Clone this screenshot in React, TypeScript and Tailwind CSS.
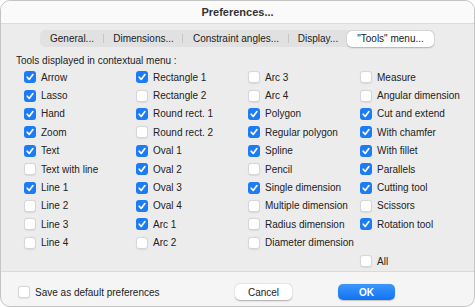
import React from 'react';

type Tool = { label: string; on: boolean } | null;

const columns: Tool[][] = [
  [
    { label: 'Arrow', on: true },
    { label: 'Lasso', on: true },
    { label: 'Hand', on: true },
    { label: 'Zoom', on: true },
    { label: 'Text', on: true },
    { label: 'Text with line', on: false },
    { label: 'Line 1', on: true },
    { label: 'Line 2', on: false },
    { label: 'Line 3', on: false },
    { label: 'Line 4', on: false },
    null,
  ],
  [
    { label: 'Rectangle 1', on: true },
    { label: 'Rectangle 2', on: false },
    { label: 'Round rect. 1', on: true },
    { label: 'Round rect. 2', on: false },
    { label: 'Oval 1', on: true },
    { label: 'Oval 2', on: true },
    { label: 'Oval 3', on: true },
    { label: 'Oval 4', on: true },
    { label: 'Arc 1', on: true },
    { label: 'Arc 2', on: false },
    null,
  ],
  [
    { label: 'Arc 3', on: false },
    { label: 'Arc 4', on: false },
    { label: 'Polygon', on: true },
    { label: 'Regular polygon', on: true },
    { label: 'Spline', on: true },
    { label: 'Pencil', on: false },
    { label: 'Single dimension', on: true },
    { label: 'Multiple dimension', on: false },
    { label: 'Radius dimension', on: false },
    { label: 'Diameter dimension', on: false },
    null,
  ],
  [
    { label: 'Measure', on: false },
    { label: 'Angular dimension', on: false },
    { label: 'Cut and extend', on: true },
    { label: 'With chamfer', on: true },
    { label: 'With fillet', on: true },
    { label: 'Parallels', on: true },
    { label: 'Cutting tool', on: true },
    { label: 'Scissors', on: false },
    { label: 'Rotation tool', on: true },
    null,
    { label: 'All', on: false },
  ],
];

const tabs = [
  { label: 'General...', w: 'w-[64px]' },
  { label: 'Dimensions...', w: 'w-[79px]' },
  { label: 'Constraint angles...', w: 'w-[106px]' },
  { label: 'Display...', w: 'w-[58px]' },
];

function Box({ on }: { on: boolean }) {
  if (on) {
    return (
      <span className="flex h-[12px] w-[12px] shrink-0 items-center justify-center rounded-[3px] bg-[#1b7cf5]">
        <svg width="10" height="10" viewBox="0 0 10 10">
          <path d="M2.2 5.2 L4.2 7.4 L7.9 2.6" fill="none" stroke="white" strokeWidth="1.7" strokeLinecap="round" strokeLinejoin="round" />
        </svg>
      </span>
    );
  }
  return <span className="h-[12px] w-[12px] shrink-0 rounded-[3px] border border-[#d6d6d6] bg-white shadow-[0_0.5px_1px_rgba(0,0,0,0.08)]" />;
}

export default function App() {
  return (
    <div className="h-[307px] w-[475px] overflow-hidden rounded-[10px] border border-[#c4c4c4] bg-[#f5f5f5] font-['Liberation_Sans',Arial,sans-serif] text-[10px] text-[#222]">
      <div className="flex h-[23px] items-center justify-center border-b border-[#dcdcdc] bg-[#fafafa] text-[11px] font-bold text-[#333]">
        Preferences...
      </div>

      <div className="h-[248px] border-b border-[#dadada] bg-[#ececec] pt-[6px]">
        <div className="mx-auto flex h-[17px] w-[395px] items-center rounded-[5px] bg-[#e1e1e1]">
          {tabs.map((t, i) => (
            <div key={t.label} className={`${t.w} relative flex h-full items-center justify-center leading-none`}>
              {t.label}
              {i < 3 && <span className="absolute right-0 top-[4px] h-[9px] w-px bg-[#c6c6c6]" />}
            </div>
          ))}
          <div className="flex h-[16px] w-[87px] items-center justify-center rounded-[5px] bg-white leading-none shadow-[0_0.5px_1.5px_rgba(0,0,0,0.25)]">
            "Tools" menu...
          </div>
        </div>

        <div className="mt-[8px] pl-[15px] leading-[12px]">Tools displayed in contextual menu :</div>

        <div className="mt-[1px] grid grid-cols-[repeat(4,112px)] pl-[23px]">
          {columns.map((col, ci) => (
            <div key={ci} className="grid grid-rows-[repeat(11,18.4px)]">
              {col.map((t, ri) =>
                t ? (
                  <div key={ri} className="flex items-center gap-[5px] whitespace-nowrap">
                    <Box on={t.on} />
                    <span>{t.label}</span>
                  </div>
                ) : (
                  <div key={ri} />
                )
              )}
            </div>
          ))}
        </div>
      </div>

      <div className="flex items-center pl-[17px] pt-[12px]">
        <div className="flex w-[217px] items-center gap-[5px]">
          <Box on={false} />
          <span>Save as default preferences</span>
        </div>
        <div className="flex h-[16px] w-[57px] items-center justify-center rounded-[5px] bg-white shadow-[0_0.5px_1.5px_rgba(0,0,0,0.3)]">
          Cancel
        </div>
        <div className="ml-[46px] flex h-[16px] w-[57px] items-center justify-center rounded-[5px] bg-gradient-to-b from-[#3c96fb] to-[#0f73f3] font-bold text-white shadow-[0_0.5px_1px_rgba(0,0,0,0.2)]">
          OK
        </div>
      </div>
    </div>
  );
}
